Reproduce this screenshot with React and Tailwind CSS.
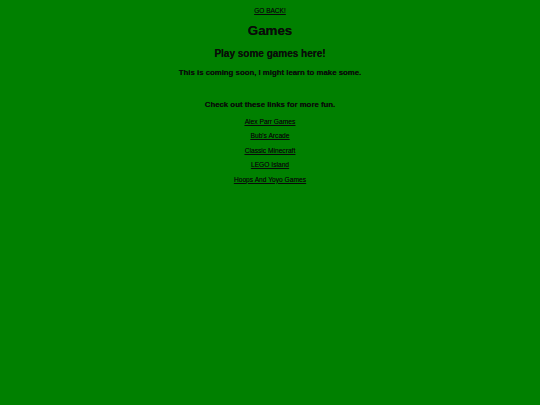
export default function App() {
  const links = [
    "Alex Parr Games",
    "Bub's Arcade",
    "Classic Minecraft",
    "LEGO Island",
    "Hoops And Yoyo Games",
  ];
  return (
    <div
      className="w-full min-h-[405px] bg-[#008000] text-[#0a0a0a] text-center flex flex-col items-center [text-shadow:0_0_0.35px_rgba(0,0,0,0.6)]"
      style={{ fontFamily: '"Liberation Sans", Arial, sans-serif' }}
    >
      <a href="#" className="mt-[7px] text-[6.5px] leading-[8px] underline">
        GO BACK!
      </a>
      <h1 className="mt-[8px] text-[13.33px] leading-[16px] font-bold">Games</h1>
      <h2 className="mt-[9px] text-[10px] leading-[12px] font-bold">Play some games here!</h2>
      <h3 className="mt-[8px] text-[7.8px] leading-[10px] font-bold">
        This is coming soon, I might learn to make some.
      </h3>
      <h3 className="mt-[22px] text-[7.8px] leading-[10px] font-bold">
        Check out these links for more fun.
      </h3>
      <div className="mt-[8px] flex flex-col items-center gap-[6.4px]">
        {links.map((l) => (
          <a key={l} href="#" className="text-[6.67px] leading-[8px] underline">
            {l}
          </a>
        ))}
      </div>
    </div>
  );
}
